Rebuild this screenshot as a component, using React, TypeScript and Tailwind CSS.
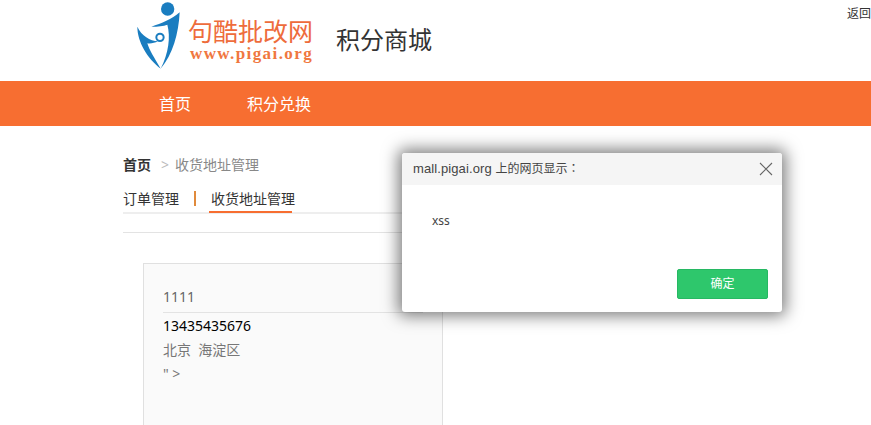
const body = "font-['Noto_Sans','Noto_Sans_CJK_SC',sans-serif]";

function Logo() {
  return (
    <div className="flex items-start">
      <svg width="60" height="75" viewBox="0 0 180 225" className="shrink-0 -ml-[7px]">
        <circle cx="113" cy="27" r="20" fill="#1a7dc0" />
        <path
          d="M149 37C125 58 95 70 64 80C84 80 100 78 112 74C122 110 116 160 92 206C128 165 146 100 149 37Z"
          fill="#1a7dc0"
        />
        <path
          d="M22 80C22 125 52 175 92 206C72 172 58 150 52 130C62 132 74 129 84 124C60 122 35 108 22 80Z"
          fill="#1a7dc0"
        />
        <circle cx="90" cy="112" r="11" fill="none" stroke="#1a7dc0" strokeWidth="6" />
      </svg>
      <div className="ml-[-2px] flex w-[130px] flex-col items-start pt-[14px]">
        <span className="h-[32px] whitespace-nowrap font-['Noto_Sans_CJK_SC',serif] text-[25px] leading-[32px] text-[#ee6c3c]">
          句酷批改网
        </span>
        <span className="ml-[2px] h-[16px] whitespace-nowrap font-['Liberation_Serif',serif] text-[17px] font-bold leading-[16px] tracking-[1.4px] text-[#f0773f]">
          www.pigai.org
        </span>
      </div>
    </div>
  );
}

function AlertDialog() {
  return (
    <div className="absolute left-[402px] top-[153px] flex h-[159px] w-[380px] flex-col overflow-hidden rounded-[3px] bg-white shadow-[0_0_16px_4px_rgba(0,0,0,0.5)]">
      <div className="flex h-[32px] items-center justify-between bg-[#f5f5f5] pl-[11px] pr-[9px] text-[#444]">
        <span className="font-['Liberation_Sans','Noto_Sans_CJK_SC',sans-serif] text-[13px] tracking-[0.1px]">
          mall.pigai.org{" "}
          <span className="text-[12px] tracking-normal">
            上的网页显示<span className="font-['Noto_Sans_CJK_TC',sans-serif]">：</span>
          </span>
        </span>
        <svg width="14" height="14" viewBox="0 0 14 14">
          <path d="M1 1L13 13M13 1L1 13" stroke="#666" strokeWidth="1.1" fill="none" />
        </svg>
      </div>
      <div className="flex flex-1 flex-col pl-[30px] pr-[14px]">
        <p className="mt-[28px] text-[12px] leading-[16px] text-[#444]">xss</p>
        <button className="ml-auto mt-[40px] h-[30px] w-[91px] rounded-[2px] border border-[#27b863] bg-[#2ec76c] text-[12px] text-white">
          确定
        </button>
      </div>
    </div>
  );
}

export default function App() {
  return (
    <div className={`relative h-[425px] w-[871px] overflow-hidden bg-white ${body}`}>
      {/* header */}
      <div className="flex h-[81px] pl-[137px]">
        <Logo />
        <h1 className="ml-[18px] mt-[25px] text-[24px] font-normal leading-[30px] text-[#333]">积分商城</h1>
        <span className="ml-auto mt-[7px] text-[12px] leading-[14px] text-[#333]">返回</span>
      </div>

      {/* nav */}
      <div className="flex h-[45px] items-center gap-[56px] bg-[#f76e31] pl-[159px] pt-[1px] text-[16px] text-white">
        <span>首页</span>
        <span>积分兑换</span>
      </div>

      <div className="px-[123px] pt-[30px]">
        {/* breadcrumb */}
        <div className="flex h-[18px] items-center text-[14px] leading-[18px] text-[#888]">
          <span className="font-bold text-[#333]">首页</span>
          <span className="ml-[10px] text-[#bbb]">&gt;</span>
          <span className="ml-[6px]">收货地址管理</span>
        </div>

        {/* tabs */}
        <div className="mt-[15px] flex h-[25px] items-start border-b-2 border-[#eee] pt-[1px] text-[14px] leading-[18px] text-[#333]">
          <span>订单管理</span>
          <span className="ml-[15px] mt-[1px] h-[15px] w-[2px] bg-[#e08a3c]" />
          <div className="relative ml-[15px]">
            <span>收货地址管理</span>
            <div className="absolute -left-[2px] top-[21px] h-[2px] w-[83px] bg-[#f76e31]" />
          </div>
        </div>
        <div className="mt-[18px] border-t border-[#e3e3e3]" />

        {/* address card */}
        <div className="ml-[20px] mt-[30px] h-[200px] w-[300px] border border-[#e0e0e0] bg-[#fafafa] px-[19px] pt-[23px]">
          <div className="h-[26px] border-b border-[#e3e3e3] text-[14px] leading-[20px] text-[#666]">1111</div>
          <div className="mt-[1px] text-[14px] leading-[24px] text-black">13435435676</div>
          <div className="text-[14px] leading-[24px] text-[#777]">北京&nbsp;&nbsp;海淀区</div>
          <div className="text-[14px] leading-[24px] text-[#777]">" &gt;</div>
        </div>
      </div>

      <AlertDialog />
    </div>
  );
}
